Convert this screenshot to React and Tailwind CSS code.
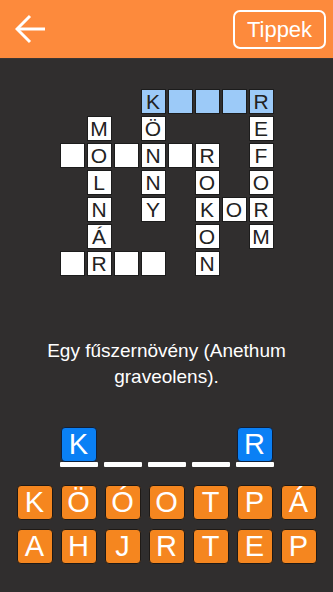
import React from "react";

const grid = [
  "___KbbbR",
  "_M_Ö___E",
  "wOwNwR_F",
  "_L_N_O_O",
  "_N_Y_KOR",
  "_Á___O_M",
  "wRww_N__",
];

const blue = [[0, 3], [0, 4], [0, 5], [0, 6], [0, 7]];

const Cell = ({ ch, r, c }) => {
  if (ch === "_") return <div className="w-[25px] h-[25px]" />;
  const isBlue = blue.some(([br, bc]) => br === r && bc === c);
  const letter = ch === "w" || ch === "b" ? "" : ch;
  return (
    <div
      className={`w-[25px] h-[25px] border border-[#1c1c1c] flex items-center justify-center text-[21px] leading-none text-[#222] ${
        isBlue ? "bg-[#9ccaf8]" : "bg-white"
      }`}
    >
      {letter}
    </div>
  );
};

const row1 = ["K", "Ö", "Ó", "O", "T", "P", "Á"];
const row2 = ["A", "H", "J", "R", "T", "E", "P"];

const Key = ({ ch }) => (
  <div className="w-[36px] h-[35px] rounded-[4px] bg-[#f5861f] border border-[#1f1a16] flex items-center justify-center text-white text-[29px] leading-none">
    {ch}
  </div>
);

const Slot = ({ ch }) => (
  <div className="w-[38px] flex flex-col items-center">
    <div className="h-[36px] w-[36px] flex items-end">
      {ch && (
        <div className="w-[36px] h-[35px] rounded-[4px] bg-[#0a80f5] border border-[#10203a] flex items-center justify-center text-white text-[29px] leading-none">
          {ch}
        </div>
      )}
    </div>
    <div className="w-[38px] h-[5px] bg-white rounded-[1px]" />
  </div>
);

export default function App() {
  return (
    <div
      className="w-[333px] h-[592px] bg-[#302e2e] flex flex-col overflow-hidden"
      style={{ fontFamily: "'Liberation Sans', Arial, sans-serif" }}
    >
      <div className="h-[59px] bg-[#fd8a3c] border-b border-[#3a3533] flex items-center justify-between pl-[15px] pr-[7px]">
        <svg width="31" height="30" viewBox="0 0 31 30" fill="none" stroke="white" strokeWidth="3" strokeLinecap="butt">
          <path d="M2 15 H30" />
          <path d="M15 2 L2 15 L15 28" />
        </svg>
        <div className="w-[93px] h-[39px] border-2 border-white rounded-[7px] flex items-center justify-center text-white text-[22px]">
          Tippek
        </div>
      </div>

      <div className="flex justify-center mt-[30px]">
        <div className="grid grid-cols-[repeat(8,25px)] gap-[2px]">
          {grid.map((row, r) =>
            [...row].map((ch, c) => <Cell key={`${r}-${c}`} ch={ch} r={r} c={c} />)
          )}
        </div>
      </div>

      <div className="mt-[62px] text-center text-white text-[19px] leading-[26px]">
        Egy fűszernövény (Anethum
        <br />
        graveolens).
      </div>

      <div className="mt-[36px] flex justify-center gap-[6px]">
        <Slot ch="K" />
        <Slot />
        <Slot />
        <Slot />
        <Slot ch="R" />
      </div>

      <div className="mt-[18px] flex flex-col items-center gap-[9px]">
        <div className="flex gap-[8px]">
          {row1.map((k, i) => <Key key={i} ch={k} />)}
        </div>
        <div className="flex gap-[8px]">
          {row2.map((k, i) => <Key key={i} ch={k} />)}
        </div>
      </div>
    </div>
  );
}
